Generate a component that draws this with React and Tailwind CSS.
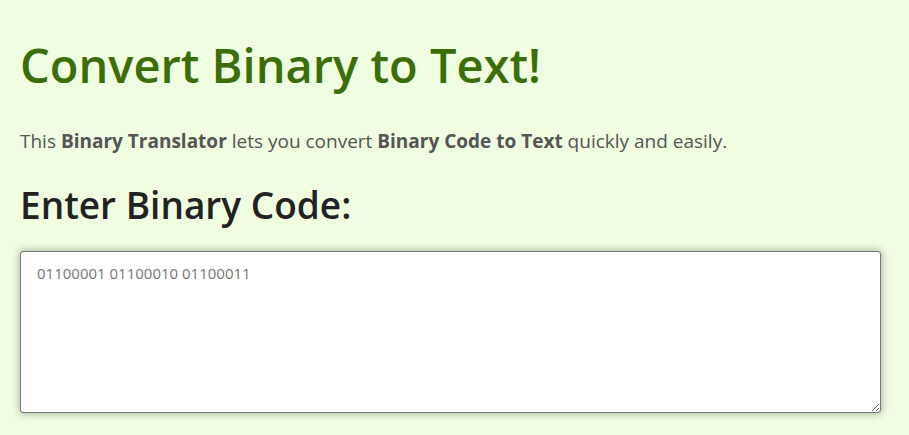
import React from "react";

export default function App() {
  return (
    <div className="min-h-[435px] bg-[#effde0] px-5 pt-[37px] font-['Open_Sans','Noto_Sans',sans-serif]">
      <h1 className="text-[47px] leading-[56px] font-semibold text-[#3b6e08]">Convert Binary to Text!</h1>
      <p className="mt-[34px] text-[19px] leading-[28px] text-[#555]">
        This <strong className="font-bold">Binary Translator</strong> lets you convert{" "}
        <strong className="font-bold">Binary Code to Text</strong> quickly and easily.
      </p>
      <h2 className="mt-[28px] text-[37px] leading-[44px] font-semibold text-[#222]">Enter Binary Code:</h2>
      <textarea
        className="mt-[24px] block h-[162px] w-[861px] rounded-[3px] border border-[#767676] bg-white px-4 py-[10px] text-[15px] text-[#333] shadow-[0_0_8px_rgba(0,0,0,0.35)] placeholder:text-[#757575] focus:outline-none"
        placeholder="01100001 01100010 01100011"
      />
    </div>
  );
}
